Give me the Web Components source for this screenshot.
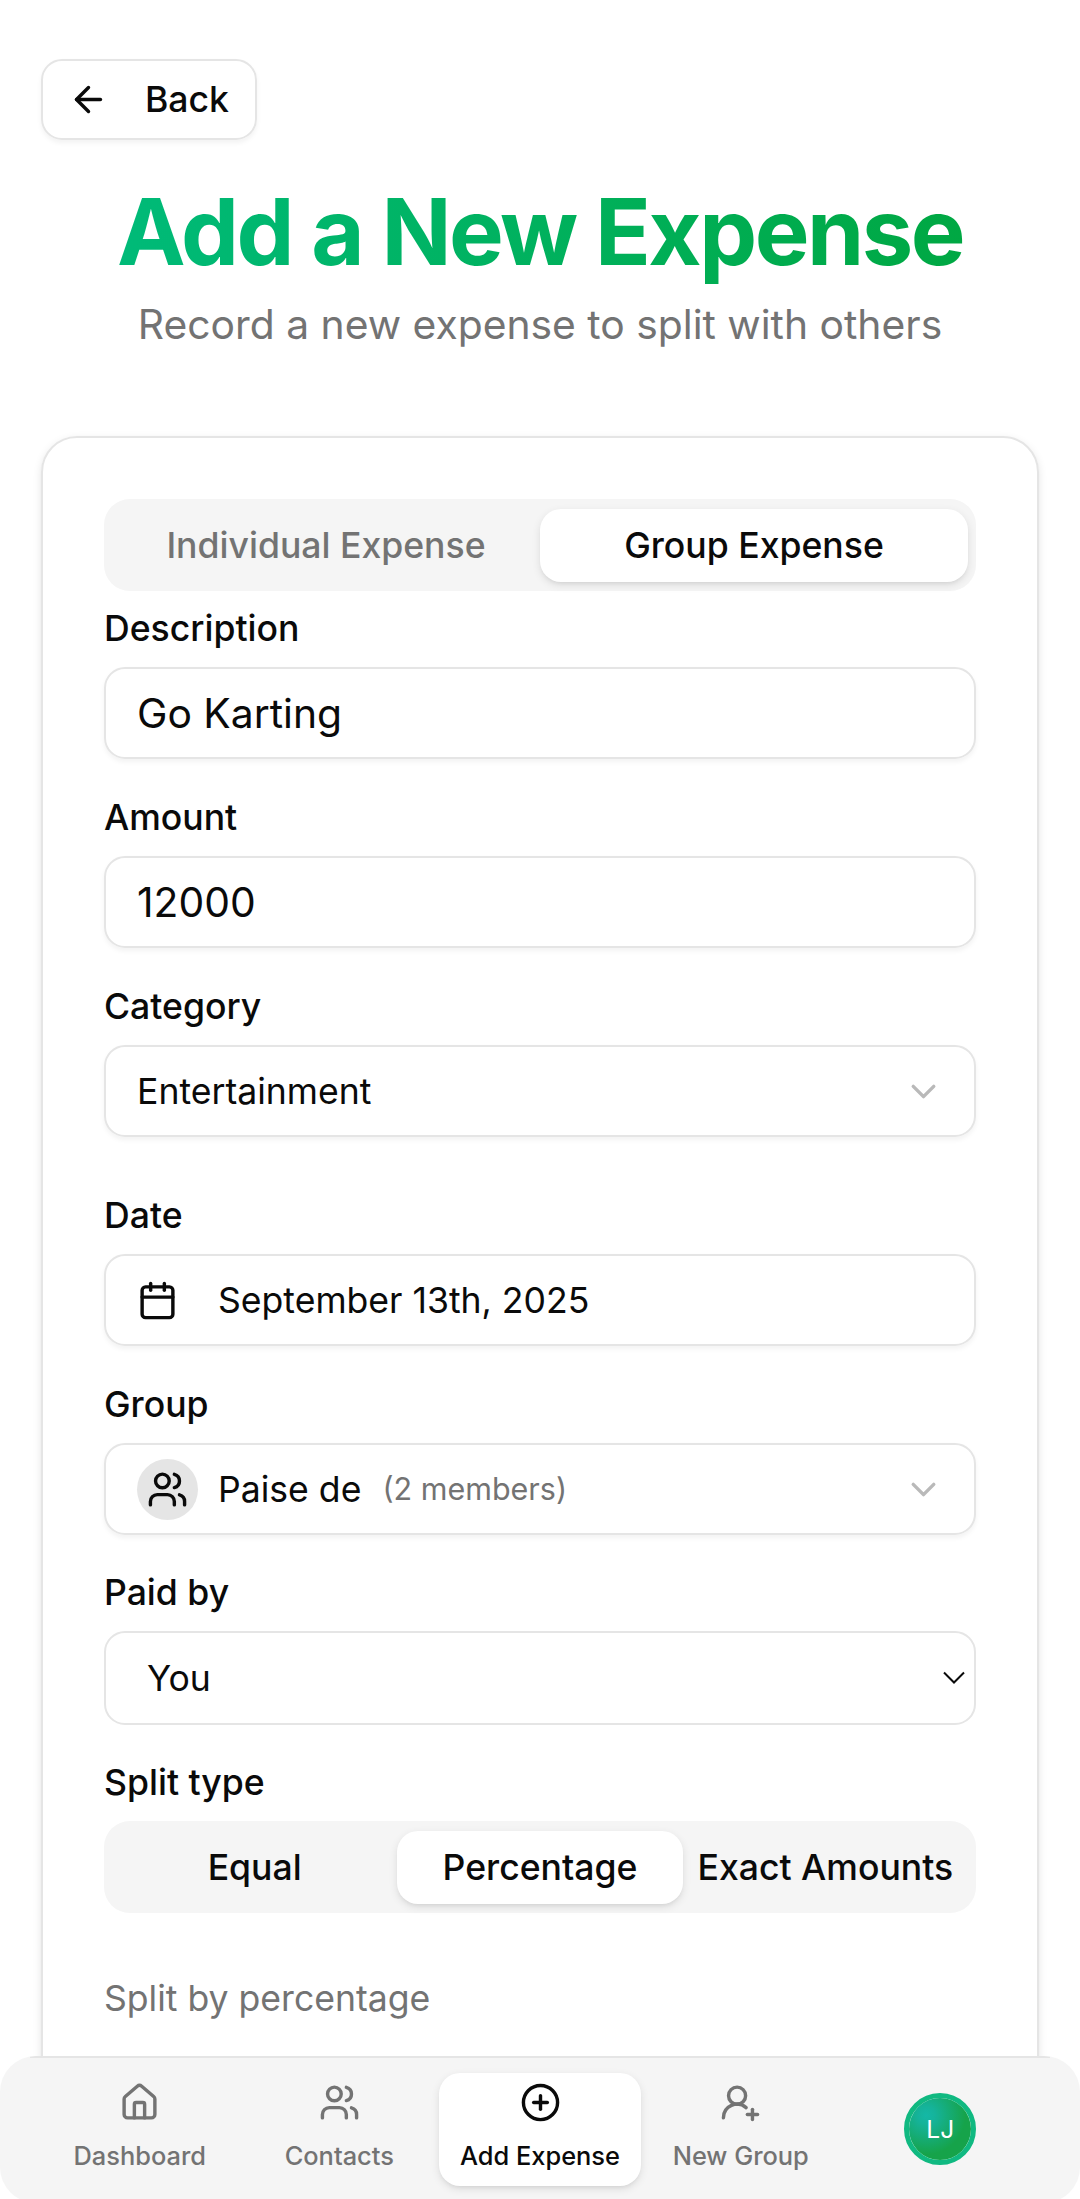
<!DOCTYPE html>
<html lang="en">
<head>
<meta charset="utf-8">
<title>Add a New Expense</title>
<style>
html,body{margin:0;padding:0;background:#fff}
body{font-family:Inter,"Liberation Sans",sans-serif;color:#0a0a0a;width:1080px;height:2199px;overflow:hidden}
</style>
</head>
<body>
<expense-page></expense-page>
<script>
const ICONS = {
  back: '<path d="m12 19-7-7 7-7"/><path d="M19 12H5"/>',
  down: '<path d="m6 9 6 6 6-6"/>',
  calendar: '<path d="M8 2v4"/><path d="M16 2v4"/><rect width="18" height="18" x="3" y="4" rx="2"/><path d="M3 10h18"/>',
  users: '<path d="M16 21v-2a4 4 0 0 0-4-4H6a4 4 0 0 0-4 4v2"/><circle cx="9" cy="7" r="4"/><path d="M22 21v-2a4 4 0 0 0-3-3.87"/><path d="M16 3.13a4 4 0 0 1 0 7.75"/>',
  house: '<path d="M15 21v-8a1 1 0 0 0-1-1h-4a1 1 0 0 0-1 1v8"/><path d="M3 10a2 2 0 0 1 .709-1.528l7-5.999a2 2 0 0 1 2.582 0l7 5.999A2 2 0 0 1 21 10v9a2 2 0 0 1-2 2H5a2 2 0 0 1-2-2z"/>',
  plus: '<circle cx="12" cy="12" r="10"/><path d="M8 12h8"/><path d="M12 8v8"/>',
  userplus: '<path d="M2 21a8 8 0 0 1 13.292-6"/><circle cx="10" cy="8" r="5"/><path d="M19 16v6"/><path d="M22 19h-6"/>'
};
function define(name, html) {
  customElements.define(name, class extends HTMLElement {
    constructor() {
      super();
      this.attachShadow({mode: 'open'}).innerHTML = typeof html === 'function' ? html(this) : html;
    }
  });
}

define('ui-icon', el => `<style>
:host{display:block;flex:none;width:41px;height:41px}
svg{display:block;width:100%;height:100%;fill:none;stroke:currentColor;stroke-width:2;stroke-linecap:round;stroke-linejoin:round}
</style><svg viewBox="0 0 24 24">${ICONS[el.getAttribute('name')]}</svg>`);

define('back-button', `<style>
:host{display:flex;box-sizing:border-box;width:216px;height:81px;align-items:center;gap:36px;padding-left:25px;border:2px solid #e5e5e5;border-radius:21px;
font-size:35.6px;font-weight:500;box-shadow:0 3px 5px rgba(0,0,0,.05)}
</style><ui-icon name="back"></ui-icon><span><slot></slot></span>`);

define('page-heading', `<style>
:host{display:block;text-align:center}
h1{margin:0;font-size:92px;line-height:104px;font-weight:700;letter-spacing:-.0275em;color:transparent;
background:linear-gradient(to right,#00bc7d,#00a63e);-webkit-background-clip:text;background-clip:text}
p{margin:9px 0 0;font-size:40.8px;line-height:62px;color:#737373}
</style><h1><slot name="title"></slot></h1><p><slot></slot></p>`);

define('form-card', `<style>
:host{display:block;box-sizing:border-box;width:998px;height:1800px;border:2px solid #e5e5e5;border-radius:36px;padding:61px 61px 0;
box-shadow:0 3px 8px rgba(0,0,0,.1),0 3px 5px -3px rgba(0,0,0,.1)}
</style><slot></slot>`);

define('tab-list', `<style>
:host{display:flex;box-sizing:border-box;width:872px;height:92px;padding:10px 8px 9px;border-radius:26px;background:#f5f5f5;align-items:stretch}
</style><slot></slot>`);
define('tab-item', `<style>
:host{display:flex;flex:1 1 0;min-width:0;align-items:center;justify-content:center;border-radius:21px;font-size:35.6px;font-weight:500;white-space:nowrap}
:host([muted]){color:#737373}
:host([active]){background:#fff;box-shadow:0 3px 8px rgba(0,0,0,.1),0 3px 5px -3px rgba(0,0,0,.1)}
</style><span><slot></slot></span>`);

define('form-field', el => `<style>
:host{display:flex;flex-direction:column;gap:20px;margin-bottom:41px}
label{font-size:35.6px;line-height:36px;font-weight:500}
</style><label>${el.getAttribute('label')}</label><slot></slot>`);

define('field-box', `<style>
:host{display:flex;box-sizing:border-box;width:872px;height:92px;align-items:center;border:2px solid #e5e5e5;border-radius:21px;padding:0 30px 0 31px;
font-size:35.6px;box-shadow:0 3px 5px rgba(0,0,0,.05)}
:host([large]){font-size:40.8px}
:host([native]){height:94px;padding:0 9px 0 41px;box-shadow:none}
::slotted(.end){margin-left:auto;color:#b9b9b9}
::slotted(.thin){margin-left:auto;width:22px;height:14px}
::slotted(.cal){margin-right:40px}
::slotted(.note){font-size:30.5px;color:#737373;margin:0 0 2px 21px}
</style><slot></slot>`);

define('group-badge', `<style>
:host{display:flex;width:61px;height:61px;border-radius:50%;background:#e5e5e5;align-items:center;justify-content:center;margin-right:20px}
</style><ui-icon name="users"></ui-icon>`);

define('nav-bar', `<style>
:host{position:absolute;left:0;top:2056px;box-sizing:border-box;width:1080px;height:147px;display:flex;padding:17px 40px 17px;
border-radius:36px;background:linear-gradient(#e5e5e5,#e5e5e5) 30px 0/1020px 2px no-repeat #f5f5f5}
</style><slot></slot>`);
define('nav-item', el => `<style>
:host{display:flex;flex:1 1 0;min-width:0;flex-direction:column;align-items:center;border-radius:21px;color:#737373;font-size:25.4px;font-weight:500;white-space:nowrap}
:host([active]){flex:none;width:202px;background:#fff;color:#0a0a0a;box-shadow:0 3px 8px rgba(0,0,0,.1),0 3px 5px -3px rgba(0,0,0,.1)}
ui-icon{margin-top:9px}
span{line-height:34px;margin-top:16px}
</style><ui-icon name="${el.getAttribute('icon')}"></ui-icon><span><slot></slot></span>`);
define('user-avatar', `<style>
:host{display:flex;flex:1 1 0;align-items:center;justify-content:center}
div{box-sizing:border-box;width:72px;height:72px;margin-bottom:2px;border-radius:50%;border:5px solid #10b981;display:flex;align-items:center;justify-content:center;
background:radial-gradient(circle at 28% 28%,#14b8a6 0,#15b39a 14%,#16a34a 62%) padding-box;color:#fff;font-size:24.5px}
</style><div><span><slot></slot></span></div>`);

define('expense-page', `<style>
:host{display:block;position:relative;width:1080px;height:2199px;overflow:hidden}
main{padding:59px 41px 0}
page-heading{margin-top:40px}
form-card{margin-top:81px}
tab-list.kind{margin-bottom:20px}
.wide{margin-bottom:61px}
.group{margin-bottom:40px}
.by{margin-bottom:40px}
.hint{font-size:35.6px;line-height:50px;color:#737373;margin-top:61px}
</style>
<main>
<back-button>Back</back-button>
<page-heading><span slot="title">Add a New Expense</span>Record a new expense to split with others</page-heading>
<form-card>
<tab-list class="kind"><tab-item muted>Individual Expense</tab-item><tab-item active>Group Expense</tab-item></tab-list>
<form-field label="Description"><field-box large>Go Karting</field-box></form-field>
<form-field label="Amount"><field-box large>12000</field-box></form-field>
<form-field label="Category" class="wide"><field-box>Entertainment<ui-icon class="end" name="down"></ui-icon></field-box></form-field>
<form-field label="Date"><field-box><ui-icon class="cal" name="calendar"></ui-icon>September 13th, 2025</field-box></form-field>
<form-field label="Group" class="group"><field-box><group-badge></group-badge>Paise de<span class="note">(2 members)</span><ui-icon class="end" name="down"></ui-icon></field-box></form-field>
<form-field label="Paid by" class="by"><field-box native>You<svg class="thin" viewBox="0 0 22 14" fill="none" stroke="#0a0a0a" stroke-width="2"><path d="m1 1.5 10 10 10-10"/></svg></field-box></form-field>
<form-field label="Split type"><tab-list><tab-item>Equal</tab-item><tab-item active>Percentage</tab-item><tab-item>Exact Amounts</tab-item></tab-list></form-field>
<div class="hint">Split by percentage</div>
</form-card>
</main>
<nav-bar>
<nav-item icon="house">Dashboard</nav-item>
<nav-item icon="users">Contacts</nav-item>
<nav-item icon="plus" active>Add Expense</nav-item>
<nav-item icon="userplus">New Group</nav-item>
<user-avatar>LJ</user-avatar>
</nav-bar>`);
</script>
</body>
</html>
